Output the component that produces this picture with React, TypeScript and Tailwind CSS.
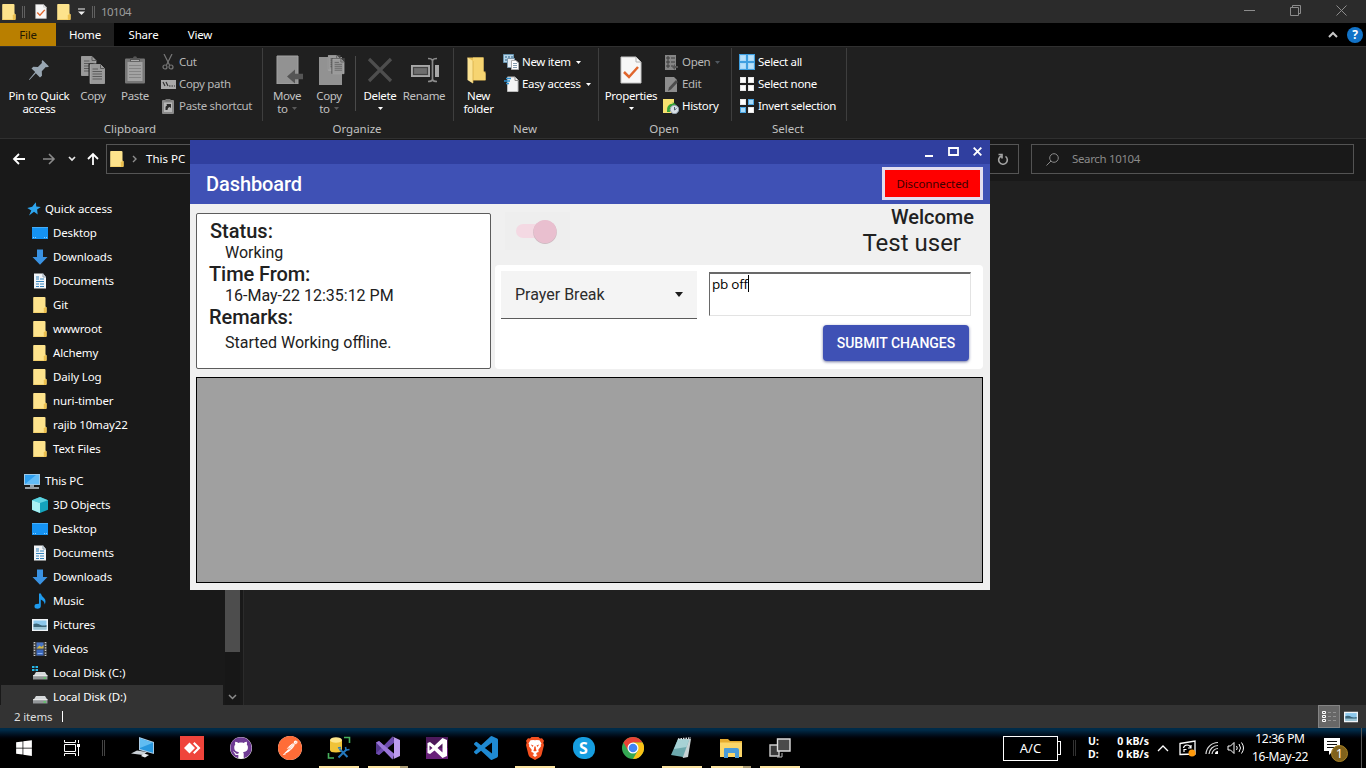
import React from "react";
import { FaGithub, FaWindows } from "react-icons/fa";
import { SiPostman } from "react-icons/si";

type IconProps = { className?: string };

const Svg = ({ w, h, vb, className = "", children }: { w: number; h: number; vb?: string; className?: string; children: React.ReactNode }) => (
  <svg width={w} height={h} viewBox={vb ?? `0 0 ${w} ${h}`} className={`block shrink-0 ${className}`} fill="none">
    {children}
  </svg>
);

/* ---------- explorer icons ---------- */

const FolderIcon = ({ className }: IconProps) => (
  <Svg w={14} h={16} className={className}>
    <path d="M1 0h10.500q1 0 1 1v8.500l1 .8V15q0 1-1 1H1q-.8 0-.8-.8V.8Q.2 0 1 0z" fill="#fde38c" />
    <path d="M10.800 16v-4.500l1.600-1.700 1.200.7V15q0 1-1 1z" fill="#ecc04f" />
    <path d="M.2 15h10.600v1H1q-.8 0-.8-1z" fill="#f5d26d" />
  </Svg>
);

const CheckDoc = ({ w = 12, h = 15 }: { w?: number; h?: number }) => (
  <Svg w={w} h={h} vb="0 0 22 28">
    <path d="M1 1h15l5 5v21H1z" fill="#f7f7f7" stroke="#c4c4c4" />
    <path d="M16 1v5h5" stroke="#b0b0b0" />
    <path d="m4 16 5 5 9-10" stroke="#e0662d" strokeWidth="2.500" />
  </Svg>
);

const PinIcon = () => (
  <Svg w={22} h={22}>
    <path d="m14.500 1 6.500 6.500-2 .8-1.200-.3-4 4.200.2 4.500-2 1.800-4.200-4.300L1.500 21 1 20.500 7.200 13 3.500 9.500l1.800-1.800 4.600.2 4-4-.2-1.500z" fill="#98a6b2" />
  </Svg>
);

const PageLines = ({ x, y }: { x: number; y: number }) => (
  <g transform={`translate(${x} ${y})`}>
    <path d="M.5.5H11l4 4v15H.5z" fill="#9a9a9a" stroke="#c0c0c0" strokeWidth=".6" />
    <path d="M11 .5v4h4M3 7.500h9.500M3 10h9.500M3 12.500h9.500M3 15h9.500M3 5h5.500" stroke="#5c5c5c" />
  </g>
);

const CopyIcon = () => (
  <Svg w={25} h={28}>
    <PageLines x={0} y={0} />
    <rect x="7.500" y="7.500" width="17" height="20.500" fill="#202020" />
    <PageLines x={8.500} y={8} />
  </Svg>
);

const PasteIcon = () => (
  <Svg w={22} h={28}>
    <rect x="1" y="2.500" width="20" height="25" rx="1" fill="#777" />
    <path d="M3.500 6h15v19h-15z" fill="#a3a3a3" />
    <path d="M5 9.500h12M5 12.500h12M5 15.500h12M5 18.500h12M5 21.500h12" stroke="#858585" />
    <path d="M6 2h3q0-1.700 2-1.700T13 2h3v3.500H6z" fill="#555" />
    <path d="M7 4.500h8" stroke="#aaa" />
  </Svg>
);

const CutIcon = () => (
  <Svg w={12} h={16}>
    <path d="M2 0 7.500 11M10 0 4.500 11" stroke="#777" strokeWidth="1.200" />
    <circle cx="3" cy="13" r="2" stroke="#777" strokeWidth="1.200" />
    <circle cx="9" cy="13" r="2" stroke="#777" strokeWidth="1.200" />
  </Svg>
);

const CopyPathIcon = () => (
  <Svg w={15} h={9}>
    <rect width="15" height="9" fill="#aaa" />
    <path d="m2 2 2 4M5 2l2 4" stroke="#333" strokeWidth="1.200" />
    <path d="M8 6h1.500M10.500 6H12M13 6h1" stroke="#333" strokeWidth="1.200" />
  </Svg>
);

const PasteShortcutIcon = () => (
  <Svg w={12} h={15}>
    <rect y="1" width="12" height="14" rx="1" fill="#8a8a8a" />
    <rect x="2" y="3.500" width="8" height="9.500" fill="#b8b8b8" />
    <path d="M3.500 11V8q0-1 1.500-1.500L4.500 5H9v4L7.500 8Q5.500 8.500 5.500 11z" fill="#2c2c2c" />
    <rect x="3.500" width="5" height="2.500" fill="#777" />
  </Svg>
);

const MoveToIcon = () => (
  <Svg w={27} h={29} className="ml-1">
    <path d="M1 1h21v28H1z" fill="#929292" />
    <path d="M1 1h21v28H1z" stroke="#a2a2a2" />
    <path d="m11 21.500 8-7v4.300h8v5.400h-8v4.300z" fill="#555" />
  </Svg>
);

const CopyToIcon = () => (
  <Svg w={27} h={30} className="ml-1">
    <path d="M1 2h23v28H1z" fill="#929292" />
    <g transform="translate(10 0) scale(.78)">
      <rect width="16" height="19" fill="#444" />
      <PageLines x={0} y={0} />
      <rect x="4.500" y="4" width="17" height="20" fill="#444" />
      <PageLines x={5.500} y={4.500} />
    </g>
  </Svg>
);

const DeleteIcon = () => (
  <Svg w={26} h={26}>
    <path d="m2 2 22 22M24 2 2 24" stroke="#4e4e4e" strokeWidth="3.200" />
  </Svg>
);

const RenameIcon = () => (
  <Svg w={28} h={26} className="ml-0.5">
    <path d="M0 8h19v12H0zM24 8h4v12h-4z" fill="#a8a8a8" />
    <rect x="2.500" y="10.500" width="14" height="7" fill="#6e6e6e" stroke="#444" strokeWidth="1.200" />
    <path d="M17 1.500q4 0 4.500 2 .5-2 4.500-2M21.500 3.500v19M17 24.500q4 0 4.500-2 .5 2 4.500 2" stroke="#8c8c8c" strokeWidth="1.700" />
  </Svg>
);

const NewFolderIcon = () => (
  <Svg w={19} h={28} className="-ml-1">
    <path d="M.5 1.500h16v14h2v9H5z" fill="#e8bf56" />
    <path d="M.5 1.500 6 5v22.500L.5 24z" fill="#fbe394" />
    <path d="M6 5V1.500h10.500v14l2 2V24H6z" fill="#f6d471" />
    <path d="M6 5v22" stroke="#d2a640" strokeWidth=".7" />
  </Svg>
);

const NewItemIcon = () => (
  <Svg w={16} h={16}>
    <path d="M.5.500h10v8h-10z" fill="#b8d6e8" stroke="#6894b0" />
    <path d="M2 3h2M5 3h2M8 3h2M2 6h3" stroke="#265f87" strokeWidth="1.200" />
    <path d="M4.500 4.500h7v9h-7z" fill="#e8eef4" stroke="#7d98ac" />
    <path d="M8.500 6.500h4.500l2.500 2.500v6.500h-7z" fill="#fff" stroke="#ababab" />
    <path d="M10 9.500h4M10 11.500h4M10 13.500h4" stroke="#859cae" />
  </Svg>
);

const EasyAccessIcon = () => (
  <Svg w={15} h={16}>
    <path d="M3.500 1H11l3 3V15.500H3.500z" fill="#f4f4f4" stroke="#bbb" />
    <path d="M11 1v3.500h3.500" stroke="#8e8e8e" />
    <path d="M2 2.500h5M0 5h6M2 7.500h3" stroke="#2b8fcf" strokeWidth="1.300" />
  </Svg>
);

const OpenIcon = () => (
  <Svg w={13} h={15}>
    <path d="M0 0h11v15H0z" fill="#858585" />
    <path d="M2 2h2v2H2zM2 6h2v2H2zM2 10h2v2H2zM6 3h4M6 7h4M6 11h2" stroke="#3c3c3c" />
    <path d="m7 12 3-3v2h3v2h-3v2z" fill="#555" />
  </Svg>
);

const EditIcon = () => (
  <Svg w={13} h={15}>
    <path d="M0 0h9l3 3v12H0z" fill="#8d8d8d" />
    <path d="M3 14 4 10.500 11 3l2 2-7 7.500z" fill="#4c4c4c" />
  </Svg>
);

const HistoryIcon = () => (
  <Svg w={16} h={15}>
    <path d="M0 0h11v14H0z" fill="#f7e16f" />
    <path d="M4 13Q3 5 10 4.500L9.500 3 13 5.500 10 8.500V7Q6 7.500 7 13z" fill="#35a43a" />
    <circle cx="11.500" cy="10.500" r="4.200" fill="#d8e0e6" stroke="#8f9eac" />
    <path d="M11.500 8v3l2-1.500" stroke="#4c5c6a" />
  </Svg>
);

const SquaresIcon = ({ colors, frame = false }: { colors: string[]; frame?: boolean }) => (
  <Svg w={16} h={16}>
    {frame && <rect width="16" height="16" fill="#3f9fe0" />}
    {colors.map((c, i) => (
      <rect key={i} x={i % 2 ? 9.5 : 1.5} y={i > 1 ? 9.5 : 1.5} width="5" height="5" fill={c} stroke={c === "#fff" ? "#e8e8e8" : frame ? "#a9d8f7" : "#4aa6e4"} />
    ))}
  </Svg>
);

const StarIcon = () => (
  <Svg w={14} h={14} className="ml-[3px]">
    <path d="m8.800.3.5 4.300 4.500.3-3.700 2.500.6 5.100-3.700-2.800-5 3.800 2.300-5.100L.3 6l4.900-1.200z" fill="#2ea5ee" />
  </Svg>
);

const DesktopIcon = () => (
  <Svg w={16} h={12}>
    <rect width="16" height="12" fill="#1593f3" />
    <path d="M0 0h16v1H0z" fill="#46adf8" />
    <path d="M1 10.500h3M12 10.500h3" stroke="#8ed0ff" strokeDasharray="1 1" />
  </Svg>
);

const DownloadIcon = () => (
  <Svg w={16} h={16}>
    <path d="M5 .5h6V8h4.500L8 15.800.5 8H5z" fill="#3a92e2" />
  </Svg>
);

const DocIcon = () => (
  <Svg w={12} h={16}>
    <path d="M0 .5h9L12 4v11.500H0z" fill="#f2f5f8" />
    <path d="M9 .5V4h3" stroke="#8c9cab" />
    <path d="M2 4h3M2 6h3M6 6h4M2 8.500h8M2 11h3M6 11h4M2 13.500h3M6 13.500h4" stroke="#3484bd" />
  </Svg>
);

const PcIcon = () => (
  <Svg w={16} h={15}>
    <rect x=".5" y=".5" width="15" height="10" fill="#2f9ff0" stroke="#9dc9e8" />
    <path d="M1 10 12 1h3v9z" fill="#62bcf8" />
    <path d="M6 11h4v2H6z" fill="#90a0ac" />
    <path d="M1 14h14" stroke="#c2ccd4" strokeWidth="1.500" />
  </Svg>
);

const CubeIcon = () => (
  <Svg w={16} h={16}>
    <path d="m8 0 8 3.300v9.400L8 16 0 12.700V3.300z" fill="#14a3bb" />
    <path d="m8 0 8 3.300L8 6 0 3.300z" fill="#5fd3e0" />
    <path d="m0 3.300 8 2.700v10l-8-3.300z" fill="#a9f0f2" />
  </Svg>
);

const MusicIcon = () => (
  <Svg w={12} h={16}>
    <path d="M5 .5h1.800Q7.500 3 10 5t.8 6.500Q10.500 8 6.800 6.500V13q0 2.800-3.300 2.800T.5 13.200q0-2.600 4.500-2.400z" fill="#1e9bee" />
  </Svg>
);

const PictureIcon = ({ w = 16 }: { w?: number }) => (
  <Svg w={w} h={12} vb="0 0 16 12">
    <rect width="16" height="12" fill="#f0f4f7" />
    <rect x="1.500" y="1.500" width="13" height="9" fill="#8cc8ec" />
    <path d="M1.500 5q4-1.500 7 1 3 1 6 0v2h-13z" fill="#3c6578" />
    <path d="M1.500 8h13v2.500h-13z" fill="#9bc4d4" />
  </Svg>
);

const VideoIcon = () => (
  <Svg w={14} h={14}>
    <rect width="14" height="14" fill="#3a3a3a" />
    <path d="M1.500 0v14M12.500 0v14" stroke="#ccc" strokeWidth="1.500" strokeDasharray="1.300 1.300" />
    <rect x="3.500" y=".5" width="7" height="6" fill="#4773c4" />
    <path d="m3.500 6.500 3-3 2 1.500 2-2v3.500z" fill="#d5b540" />
    <rect x="3.500" y="7.500" width="7" height="6" fill="#3c68bc" />
    <path d="M4.500 11.500h5" stroke="#8bb4ee" />
  </Svg>
);

const DiskIcon = ({ win = false }: { win?: boolean }) => (
  <Svg w={16} h={15}>
    {win && <path d="M0 0h2.500v2H0zM3.500 0H6v2H3.500zM0 3h2.500v2H0zM3.500 3H6v2H3.500z" fill="#27b7e8" />}
    <path d="M4 6h9l2.500 4h-14z" fill="#d5d8da" />
    <path d="M1 9.500h14.500v4H1z" fill="#929698" />
    <path d="M1 9.700h14.500" stroke="#f2f2f2" />
    <path d="M11.500 12h2.500" stroke="#51d35a" strokeWidth="1.300" />
  </Svg>
);

const Caret = ({ className = "text-white" }: IconProps) => (
  <Svg w={5} h={3} className={className}>
    <path d="M0 0h5L2.500 3z" fill="currentColor" />
  </Svg>
);

/* ---------- ribbon ---------- */

const BigButton = ({ icon, lines, width, dim = false, caret }: { icon: React.ReactNode; lines: string[]; width: string; dim?: boolean; caret?: "inline" | "below" }) => (
  <div className={`flex flex-col items-center ${width} ${dim ? "text-[#c2c2c2]" : "text-white"}`}>
    <div className="flex h-[37px] items-center justify-center">{icon}</div>
    <div className="mt-px text-center leading-[13px] whitespace-nowrap">
      {lines.map((l, i) => (
        <div key={l} className="flex items-center justify-center gap-1">
          {l}
          {caret === "inline" && i === lines.length - 1 && <Caret className="text-[#5a5a5a]" />}
        </div>
      ))}
    </div>
    {caret === "below" && <Caret className="mt-[5px]" />}
  </div>
);

type SmallItem = { icon: React.ReactNode; label: string; dim?: boolean; caret?: boolean };

const SmallList = ({ items }: { items: SmallItem[] }) => (
  <div className="flex flex-col">
    {items.map((it) => (
      <div key={it.label} className={`flex h-[22px] items-center gap-[3px] whitespace-nowrap ${it.dim ? "text-[#b8b8b8]" : "text-white"}`}>
        <span className="flex w-4 justify-center">{it.icon}</span>
        <span>{it.label}</span>
        {it.caret && <Caret className={it.dim ? "ml-0.5 text-[#505860]" : "ml-0.5 text-white"} />}
      </div>
    ))}
  </div>
);

const Group = ({ label, width, pad = "", children }: { label: string; width: string; pad?: string; children: React.ReactNode }) => (
  <section className={`flex shrink-0 ${width}`}>
    <div className="flex min-w-0 flex-1 flex-col">
      <div className={`flex h-[70px] ${pad}`}>{children}</div>
      <div className="flex h-[15px] items-center justify-center pr-0.5 tracking-normal text-[#c0c0c0]">{label}</div>
    </div>
    <div className="-mt-[3px] h-[73px] w-px bg-[#3e3e3e]" />
  </section>
);

const Ribbon = () => (
  <div className="flex h-[93px] border-t border-b border-[#303030] bg-[#202020] pt-1 tracking-[-0.330px]">
    <Group label="Clipboard" width="w-[263px]" pad="pl-0.5">
      <BigButton width="w-[74px]" icon={<PinIcon />} lines={["Pin to Quick", "access"]} />
      <BigButton width="w-[34px]" dim icon={<CopyIcon />} lines={["Copy"]} />
      <BigButton width="w-[50px]" dim icon={<PasteIcon />} lines={["Paste"]} />
      <SmallList
        items={[
          { icon: <CutIcon />, label: "Cut", dim: true },
          { icon: <CopyPathIcon />, label: "Copy path", dim: true },
          { icon: <PasteShortcutIcon />, label: "Paste shortcut", dim: true },
        ]}
      />
    </Group>
    <Group label="Organize" width="w-[191px]" pad="pl-[3px]">
      <BigButton width="w-[42px]" dim icon={<MoveToIcon />} lines={["Move", "to"]} caret="inline" />
      <BigButton width="w-[42px]" dim icon={<CopyToIcon />} lines={["Copy", "to"]} caret="inline" />
      <div className="mr-[3px] ml-[5px] mt-[5px] h-[55px] w-px bg-[#4a4a4a]" />
      <BigButton width="w-[42px]" icon={<DeleteIcon />} lines={["Delete"]} caret="below" />
      <BigButton width="w-[46px]" dim icon={<RenameIcon />} lines={["Rename"]} />
    </Group>
    <Group label="New" width="w-[145px]" pad="pl-[3px]">
      <BigButton width="w-[43px]" icon={<NewFolderIcon />} lines={["New", "folder"]} />
      <div className="pl-[3px]">
        <SmallList
          items={[
            { icon: <NewItemIcon />, label: "New item", caret: true },
            { icon: <EasyAccessIcon />, label: "Easy access", caret: true },
          ]}
        />
      </div>
    </Group>
    <Group label="Open" width="w-[133px]" pad="pl-[3px]">
      <BigButton width="w-[58px]" icon={<CheckDoc w={22} h={28} />} lines={["Properties"]} caret="below" />
      <div className="pl-[3px]">
        <SmallList
          items={[
            { icon: <OpenIcon />, label: "Open", dim: true, caret: true },
            { icon: <EditIcon />, label: "Edit", dim: true },
            { icon: <HistoryIcon />, label: "History" },
          ]}
        />
      </div>
    </Group>
    <Group label="Select" width="w-[115px]" pad="pl-[7px]">
      <SmallList
        items={[
          { icon: <SquaresIcon frame colors={["#b7e0fa", "#b7e0fa", "#b7e0fa", "#b7e0fa"]} />, label: "Select all" },
          { icon: <SquaresIcon colors={["#fff", "#fff", "#fff", "#fff"]} />, label: "Select none" },
          { icon: <SquaresIcon colors={["#fff", "#a9daf8", "#a9daf8", "#fff"]} />, label: "Invert selection" },
        ]}
      />
    </Group>
  </div>
);

/* ---------- top bars ---------- */

const TitleBar = () => (
  <div className="flex h-[23px] items-center bg-[#2b2b2b] text-[#9c9c9c]">
    <FolderIcon className="ml-0.5" />
    <span className="ml-[6px] h-3 w-[3px] border-x border-[#606060]" />
    <span className="ml-[10px]"><CheckDoc /></span>
    <FolderIcon className="ml-[10px]" />
    <Svg w={7} h={7} className="ml-[7px]">
      <path d="M0 1h7" stroke="#eee" />
      <path d="M0 3.500h7L3.500 7z" fill="#eee" />
    </Svg>
    <span className="mr-[6px] ml-[7px] h-3 w-[3px] border-x border-[#606060]" />
    <span className="tracking-[-0.550px]">10104</span>
    <div className="mr-[19px] mb-[3px] ml-auto flex items-center gap-[35px] text-[#8c8c8c]">
      <Svg w={11} h={11}><path d="M0 5.500h11" stroke="currentColor" /></Svg>
      <Svg w={11} h={11}><path d="M.5 2.500h8v8h-8zM2.500 2.500v-2h8v8h-2" stroke="currentColor" /></Svg>
      <Svg w={11} h={11}><path d="m.5.500 10 10m0-10-10 10" stroke="currentColor" /></Svg>
    </div>
  </div>
);

const TabRow = () => (
  <div className="flex h-[23px] bg-black tracking-[-0.2px] text-white">
    <div className="flex w-14 items-center justify-center bg-[#b97f00] text-[#251a00]">File</div>
    <div className="flex w-[58px] items-center justify-center bg-[#202020]">Home</div>
    <div className="flex w-[59px] items-center justify-center">Share</div>
    <div className="flex w-[54px] items-center justify-center">View</div>
    <div className="mr-[3px] ml-auto flex items-center gap-[9px]">
      <Svg w={10} h={7}><path d="m1 6 4-4 4 4" stroke="#c8c8c8" strokeWidth="2" /></Svg>
      <span className="flex size-[16px] items-center justify-center rounded-full bg-[#1273c8] text-[12px] font-bold">?</span>
    </div>
  </div>
);

const AddressRow = () => (
  <div className="flex h-[42px] items-start bg-[#191919] pt-[5px]">
    <div className="flex h-[30px] w-[106px] items-center pl-3">
      <Svg w={14} h={12}><path d="M13 6H2m5-5L2 6l5 5" stroke="#fff" strokeWidth="1.800" /></Svg>
      <Svg w={14} h={12} className="ml-4"><path d="M1 6h11M7 1l5 5-5 5" stroke="#8a8a8a" strokeWidth="1.600" /></Svg>
      <Svg w={8} h={6} className="ml-[12px]"><path d="m1 1 3 3 3-3" stroke="#e8e8e8" strokeWidth="1.700" /></Svg>
      <Svg w={12} h={14} className="ml-[11px]"><path d="M6 13V2M1 7l5-5 5 5" stroke="#fff" strokeWidth="1.800" /></Svg>
    </div>
    <div className="flex h-[30px] w-[913px] items-center border border-[#555] pl-[3px] text-white">
      <FolderIcon />
      <Svg w={5} h={8} className="ml-2"><path d="m1 1 3 3-3 3" stroke="#8e8e8e" strokeWidth="1.400" /></Svg>
      <span className="ml-[9px]">This PC</span>
      <Svg w={12} h={12} className="mr-[9px] ml-auto"><path d="M4.200 3A4.300 4.300 0 1 0 8.500 3.400M1.500 1.500H5V5.500" stroke="#a4a4a4" strokeWidth="1.600" /></Svg>
    </div>
    <div className="ml-3 flex h-[30px] w-[323px] items-center border border-[#535353] pl-[14px] text-[#8a8a8a]">
      <Svg w={13} h={13}>
        <circle cx="8" cy="5" r="4.300" stroke="#8a8a8a" />
        <path d="M5 8 .5 12.500" stroke="#8a8a8a" />
      </Svg>
      <span className="ml-[13px] tracking-[-0.350px]">Search 10104</span>
    </div>
  </div>
);

/* ---------- navigation pane ---------- */

const NavRow = ({ icon, label, root = false, selected = false }: { icon: React.ReactNode; label: string; root?: boolean; selected?: boolean }) => (
  <div className={`ml-px flex h-6 w-[222px] shrink-0 items-center text-white ${root ? "pl-[23px]" : "pl-[31px]"} ${selected ? "bg-[#333]" : ""}`}>
    <span className="flex w-4 justify-center">{icon}</span>
    <span className="ml-[5px] whitespace-nowrap">{label}</span>
  </div>
);

const quickFolders = ["Git", "wwwroot", "Alchemy", "Daily Log", "nuri-timber", "rajib 10may22", "Text Files"];

const NavPane = () => (
  <div className="flex w-[244px] overflow-hidden border-r border-[#2b2b2b] bg-[#191919] tracking-[-0.130px]">
    <div className="flex w-[225px] flex-col pt-4">
      <NavRow root icon={<StarIcon />} label="Quick access" />
      <NavRow icon={<DesktopIcon />} label="Desktop" />
      <NavRow icon={<DownloadIcon />} label="Downloads" />
      <NavRow icon={<DocIcon />} label="Documents" />
      {quickFolders.map((f) => (
        <NavRow key={f} icon={<FolderIcon />} label={f} />
      ))}
      <div className="h-2 shrink-0" />
      <NavRow root icon={<PcIcon />} label="This PC" />
      <NavRow icon={<CubeIcon />} label="3D Objects" />
      <NavRow icon={<DesktopIcon />} label="Desktop" />
      <NavRow icon={<DocIcon />} label="Documents" />
      <NavRow icon={<DownloadIcon />} label="Downloads" />
      <NavRow icon={<MusicIcon />} label="Music" />
      <NavRow icon={<PictureIcon />} label="Pictures" />
      <NavRow icon={<VideoIcon />} label="Videos" />
      <NavRow icon={<DiskIcon win />} label="Local Disk (C:)" />
      <NavRow selected icon={<DiskIcon />} label="Local Disk (D:)" />
    </div>
    <div className="flex w-[15px] flex-col items-center justify-between bg-[#171717] pb-[5px]">
      <div className="h-[471px] w-full bg-[#4d4d4d]" />
      <Svg w={9} h={6}><path d="m1 1 3.500 3.500L8 1" stroke="#8c8c8c" strokeWidth="1.500" /></Svg>
    </div>
  </div>
);

const StatusBar = () => (
  <div className="flex h-[23px] items-center bg-[#333] pl-[14px] text-[#dedede]">
    <span className="tracking-[-0.150px]">2 items</span>
    <span className="ml-[10px] h-[11px] w-px bg-white" />
    <div className="mr-[8px] ml-auto flex items-center">
      <span className="flex h-[23px] w-[22px] items-center justify-center border border-[#848484] bg-[#676767]">
        <Svg w={14} h={12}>
          <path d="M.5.500h3v2h-3zM.5 4.500h3v2h-3zM.5 8.500h3v2h-3z" stroke="#fff" />
          <path d="M6 1.500h3M11 1.500h3M6 5.500h3M11 5.500h3M6 9.500h3M11 9.500h3" stroke="#929292" />
        </Svg>
      </span>
      <span className="ml-1"><PictureIcon w={14} /></span>
    </div>
  </div>
);

/* ---------- dashboard window ---------- */

const StatusCard = () => (
  <div className="h-[156px] w-[295px] rounded-[2px] border border-[#5c5c5c] bg-white pt-[5px] pl-[13px] text-[#212121]">
    <div className="text-[20px] leading-[24px] font-medium">Status:</div>
    <div className="pl-[15px] text-[16px] leading-[19px]">Working</div>
    <div className="-ml-px text-[20px] leading-[24px] font-medium tracking-[-0.080px]">Time From:</div>
    <div className="pl-[15px] text-[16px] leading-[19px]">16-May-22 12:35:12 PM</div>
    <div className="-ml-px text-[20px] leading-[24px] font-medium tracking-[-0.080px]">Remarks:</div>
    <div className="mt-1 pl-[15px] text-[16px] leading-[19px]">Started Working offline.</div>
  </div>
);

const ChangeForm = () => (
  <div className="h-[104px] rounded-[4px] bg-white pt-[6px] pl-[6px]">
    <div className="flex">
      <div className="flex h-12 w-[196px] items-center justify-between border-b border-[#5b5b5b] bg-[#f4f4f4] pr-[14px] pl-[14px] text-[16px] text-[#2c2c2c]">
        <span>Prayer Break</span>
        <Svg w={8} h={5}><path d="M0 0h8L4 5z" fill="#1c1c1c" /></Svg>
      </div>
      <div className="mt-px ml-3 flex h-[44px] w-[262px] items-start border-t-2 border-r border-b border-l border-t-[#696969] border-r-[#e3e3e3] border-b-[#e3e3e3] border-l-[#696969] pt-px pl-[2px] text-black">
        <span className="font-['Open_Sans',sans-serif] text-[13.500px] leading-[18px] tracking-[-0.250px]">pb off</span>
        <span className="h-[17px] w-px bg-black" />
      </div>
    </div>
    <div className="mt-[6px] mr-[14px] flex justify-end">
      <button className="h-9 w-[146px] rounded-[4px] bg-[#3f51b5] text-[14px] font-medium whitespace-nowrap text-white shadow-[0_1px_3px_rgba(20,30,100,0.6)]">SUBMIT CHANGES</button>
    </div>
  </div>
);

const Dashboard = () => (
  <div className="absolute top-[140px] left-[190px] flex h-[450px] w-[800px] flex-col bg-[#f0f0f0] font-[Roboto,sans-serif]">
    <div className="flex h-6 items-center justify-end gap-[14px] bg-[#303f9f] pr-[8px] pb-px">
      <Svg w={10} h={10}><path d="M1 9h8" stroke="#fff" strokeWidth="2" /></Svg>
      <Svg w={11} h={9}><path d="M1 1h9v7H1z" stroke="#fff" strokeWidth="1.800" /></Svg>
      <Svg w={9} h={9}><path d="m.7.700 7.600 7.600M8.300.700.700 8.300" stroke="#fff" strokeWidth="1.900" /></Svg>
    </div>
    <div className="flex h-10 items-center justify-between bg-[#3f51b5] pr-[7px] pl-4">
      <h1 className="text-[20px] font-medium tracking-[-0.080px] text-white">Dashboard</h1>
      <div className="mb-px flex h-[33px] w-[101px] items-center justify-center border-[3px] border-[#e3dff0] bg-[#f00] font-['Noto_Sans',sans-serif] text-[11.500px] tracking-[-0.1px] text-[#400000]">Disconnected</div>
    </div>
    <div className="flex h-[173px] shrink-0 pt-[9px] pl-[6px]">
      <StatusCard />
      <div className="-mt-[9px] ml-1 w-[488px]">
        <div className="flex h-[61px] justify-between">
          <div className="mt-2 ml-[10px] flex h-[38px] w-[65px] items-center bg-[#eee] pl-[11px]">
            <Svg w={44} h={28}>
              <rect x="0" y="7" width="36" height="14" rx="7" fill="#f4d9e3" />
              <circle cx="29" cy="15.200" r="11.800" fill="#cdbac1" />
              <circle cx="29" cy="14.500" r="11.500" fill="#e9bfcf" />
            </Svg>
          </div>
          <div className="pt-px text-[#212121]">
            <div className="pr-[9px] text-right text-[20px] leading-[24px] font-medium">Welcome</div>
            <div className="pr-[22px] text-right text-[24px] leading-[28px]">Test user</div>
          </div>
        </div>
        <ChangeForm />
      </div>
    </div>
    <div className="ml-[6px] h-[206px] w-[787px] border border-black bg-[#a0a0a0]" />
  </div>
);

/* ---------- taskbar ---------- */

const vsCodePath =
  "M23.150 2.587L18.210.210a1.494 1.494 0 0 0-1.705.290l-9.460 8.630-4.120-3.128a.999.999 0 0 0-1.276.057L.327 7.261A1 1 0 0 0 .326 8.740L3.899 12 .326 15.260a1 1 0 0 0 .001 1.479L1.650 17.940a.999.999 0 0 0 1.276.057l4.120-3.128 9.460 8.630a1.492 1.492 0 0 0 1.704.290l4.942-2.377A1.500 1.500 0 0 0 24 20.060V3.939a1.500 1.500 0 0 0-.850-1.352zm-5.146 14.861L10.826 12l7.178-5.448v10.896z";

const RemoteIcon = () => (
  <Svg w={24} h={24}>
    <path d="m8 1 15 5v12L8 14z" fill="#a9cce6" />
    <path d="m9 2.500 13 4.300v10L9 13z" fill="#2797df" />
    <path d="m9 2.500 13 4.300L9 12z" fill="#60bcf2" />
    <path d="m0 17.500 6-3 10 1.500-4 3z" fill="#c9d0d6" />
    <path d="m10 20 3-2.500 5 1.500-4 2.500z" fill="#e6eaed" />
  </Svg>
);

const AnyDeskIcon = () => (
  <Svg w={24} h={24}>
    <rect width="24" height="24" fill="#ef443b" />
    <path d="m9.500 6.500 5.500 5.500-5.500 5.500L4 12z" fill="#fff" />
    <path d="m13 7.500 1.500-1.500 6 6-6 6L13 16.500l4.500-4.500z" fill="#fff" />
  </Svg>
);

const DbToolsIcon = () => (
  <Svg w={24} h={24}>
    <path d="M3 4v10q0 2.500 6 2.500t6-2.500V4z" fill="#f0c338" />
    <ellipse cx="9" cy="4" rx="6" ry="2.800" fill="#fde68c" />
    <path d="M17 1.500h5.500V7M1.500 17v5H7" stroke="#47b15d" strokeWidth="1.600" />
    <path d="m12.500 13 8 8M19.500 13.500l-8 8" stroke="#2378bd" strokeWidth="2" />
    <path d="m18.500 11 .5 3 3.500-.5M11 12l3-.5" stroke="#2378bd" strokeWidth="1.600" />
  </Svg>
);

const VsIcon = () => (
  <Svg w={24} h={24}>
    <path d="M0 6.500 3 5l3 2.500v9L3 19l-3-1.500z" fill="#53378e" />
    <path d="M0 17.500 16.500.500 19 6 3 19z" fill="#6d4bae" />
    <path d="M0 6.500 3 5l15.500 13-2 5.500z" fill="#9a76d8" />
    <path d="m16.500.500 7.500 3.500v16l-7.500 3.500q1.500-.5 1.500-3v-17q0-2-1.500-3z" fill="#bd9bee" />
  </Svg>
);

const VsOldIcon = () => (
  <Svg w={22} h={22}>
    <rect y="11" width="22" height="11" fill="#68217a" />
    <rect width="22" height="22" fill="#68217a" opacity=".75" />
    <path d="M16.500 1 21 3v16l-4.500 2-8-7.500L4 17l-2.500-1V6L4 5l4.500 3.500zm0 5.500L11.500 11l5 4.500zM3.500 8.500v5L6.500 11z" fill="#fff" fillRule="evenodd" />
  </Svg>
);

const BraveIcon = () => (
  <Svg w={20} h={23}>
    <path d="M5 1.500 6.500 0h7L15 1.500l2-.2 2 2.500-.7 2 .7 2.200-2.500 10q-.6 1.600-2 2.500L10 23l-4.500-2.500q-1.400-.9-2-2.500L1 8l.7-2.200-.7-2 2-2.500z" fill="#f4501f" />
    <path d="m10 3.300 1.500-.3 3 .3 2 3.200-.8 1.300.3 1.500-2.700 3.500.4 2.200-1.700.5-1 1.500-1 .7-1-.7-1-1.500-1.700-.5.400-2.200L4 9.300l.3-1.500-.8-1.300 2-3.200 3-.3zM7.500 18 10 16.500l2.500 1.500-2.500 2z" fill="#fff" />
    <path d="m5.800 7.500 2.700 1-1 1.500zM14.200 7.500l-2.700 1 1 1.500zM9.300 9.500h1.400l.3 3 .9.8-1.900 1.200-1.900-1.200.9-.8z" fill="#f4501f" />
  </Svg>
);

const SkypeIcon = () => (
  <span className="flex size-[22px] items-center justify-center rounded-[9px_11px_9px_11px] bg-[#169ee0] font-['Open_Sans',sans-serif] text-[16px] leading-none font-bold text-white">S</span>
);

const ChromeIcon = () => (
  <Svg w={22} h={22}>
    <circle cx="11" cy="11" r="11" fill="#34a853" />
    <path d="M1.470 5.500A11 11 0 0 1 20.530 5.500H11L6.240 13.750z" fill="#ea4335" />
    <path d="M20.530 5.500A11 11 0 0 1 11 22l4.760-8.250L11 5.500z" fill="#fbc116" />
    <circle cx="11" cy="11" r="5.500" fill="#fff" />
    <circle cx="11" cy="11" r="4.300" fill="#4285f4" />
  </Svg>
);

const NotepadIcon = () => (
  <Svg w={24} h={24}>
    <path d="M8 3h13l-3 18-5 1z" fill="#c7d2d4" />
    <path d="m8 3 11 1-6 17-12-2z" fill="#6da9ad" />
    <path d="m8 3 11 1-2.500 7L4 13z" fill="#a7d2d5" />
    <path d="m8 3 13-1" stroke="#e2e8e9" strokeWidth="1.500" strokeDasharray="1.500 1" />
  </Svg>
);

const ExplorerIcon = () => (
  <Svg w={22} h={20}>
    <path d="M0 1h8l2 2h12v16H0z" fill="#e6ac30" />
    <path d="M0 4.500h22V19H0z" fill="#fbd669" />
    <path d="M5 10h12q2 0 2 2v8h-4v-5H8v5H4v-9q0-1 1-1z" fill="#4a9bd8" />
  </Svg>
);

const WindowsPairIcon = () => (
  <Svg w={22} h={20}>
    <path d="M1 7h9v11H1z" fill="#3a3a3a" stroke="#ccc" strokeWidth="1.400" />
    <path d="M8.500 1H21v12H8.500z" fill="#4b4b4b" stroke="#ddd" strokeWidth="1.400" />
    <path d="M8 19h5v-4" stroke="#bbb" />
  </Svg>
);

const apps: { icon: React.ReactNode; open?: "single" | "multi" }[] = [
  { icon: <RemoteIcon /> },
  { icon: <AnyDeskIcon /> },
  { icon: <span className="rounded-full bg-white"><FaGithub size={22} color="#6f3b94" /></span> },
  { icon: <span className="rounded-full bg-white"><SiPostman size={24} color="#ff6c37" /></span> },
  { icon: <DbToolsIcon />, open: "single" },
  { icon: <VsIcon />, open: "multi" },
  { icon: <VsOldIcon /> },
  { icon: <Svg w={24} h={24}><path d={vsCodePath} fill="#1f8ad2" /></Svg> },
  { icon: <BraveIcon />, open: "single" },
  { icon: <SkypeIcon /> },
  { icon: <ChromeIcon /> },
  { icon: <NotepadIcon />, open: "single" },
  { icon: <ExplorerIcon />, open: "multi" },
  { icon: <WindowsPairIcon />, open: "single" },
];

const Taskbar = () => (
  <div className="flex h-10 bg-linear-to-b from-[#002b48] from-5% to-black to-35% text-white">
    <div className="flex w-12 items-center justify-center"><FaWindows size={18} /></div>
    <div className="flex w-12 items-center justify-center">
      <Svg w={17} h={16}>
        <path d="M.5 0v2.500h11V0M.5 16v-2.500h11V16M.5 4.500h11v7H.5zM14.500 0v3M14.500 7v9" stroke="#fff" />
        <rect x="13" y="4" width="3" height="3" fill="#fff" />
      </Svg>
    </div>
    <div className="flex w-[22px] items-center pl-[6px]"><span className="h-[16px] w-[3px] border-x border-[#444]" /></div>
    {apps.map((a, i) => (
      <div key={i} className="flex w-[49px] flex-col items-center">
        <div className="flex h-[38px] items-center pt-[2px]">{a.icon}</div>
        {a.open && (
          <div className="flex h-0.5 w-10 bg-[#fbe3a0]">
            {a.open === "multi" && <div className="ml-auto w-2 bg-[#ab9c74]" />}
          </div>
        )}
      </div>
    ))}
    <div className="ml-auto flex items-center">
      <div className="flex items-center">
        <div className="flex h-[25px] w-[55px] items-center justify-center border border-white text-[13px]">A/C</div>
        <div className="h-[14px] w-[3px] border-y border-r border-white" />
      </div>
      <span className="ml-[12px] h-4 w-[3px] border-x border-[#333]" />
      <div className="ml-3 flex w-[61px] flex-col text-[10.500px] leading-[13px] font-bold">
        <div className="flex justify-between"><span>U:</span><span>0 kB/s</span></div>
        <div className="flex justify-between"><span>D:</span><span>0 kB/s</span></div>
      </div>
      <Svg w={12} h={7} className="ml-[8px]"><path d="m1 6 5-5 5 5" stroke="#fff" strokeWidth="1.300" /></Svg>
      <Svg w={17} h={17} className="ml-[10px]">
        <path d="M1 3.500 16 1v13L1 14.500z" stroke="#fff" strokeWidth="1.300" />
        <path d="M4.500 8Q5 5 8 5t3.500 2.500M12 5v3H9M5 12V9.500h2.500" stroke="#fff" strokeWidth="1.200" />
        <circle cx="13" cy="13" r="3.500" fill="#ff9a0c" />
      </Svg>
      <Svg w={14} h={14} className="ml-[9px]">
        <path d="M1 13A12 12 0 0 1 13 1.500M4 13a9 9 0 0 1 9-8.500M7 13a6 6 0 0 1 6-5.500" stroke="#ddd" strokeWidth="1.200" />
        <path d="M10 13a3 3 0 0 1 3-3v3z" fill="#fff" />
      </Svg>
      <Svg w={18} h={14} className="ml-[8px]">
        <path d="M1 5h2.500L7 1.500v11L3.500 9H1z" stroke="#fff" />
        <path d="M9.500 5q1.500 2 0 4M12 3q3 4 0 8M14.500 1.500q4 5.500 0 11" stroke="#fff" />
      </Svg>
      <div className="ml-[5px] w-[60px] text-center text-[12px] leading-[18px] tracking-[-0.320px] whitespace-nowrap">
        <div>12:36 PM</div>
        <div>16-May-22</div>
      </div>
      <div className="relative ml-[14px] h-6 w-6">
        <Svg w={16} h={17} className="mt-0.5">
          <path d="M0 0h16v13H9l-4 4v-4H0z" fill="#fff" />
          <path d="M3 3.500h10M3 6.500h10M3 9.500h10" stroke="#111" />
        </Svg>
        <span className="absolute top-[9px] left-[7px] flex size-[17px] items-center justify-center rounded-full border border-[#a88224] bg-[#80621c] text-[12px]">1</span>
      </div>
      <div className="mr-[4px] ml-[13px] h-10 w-px bg-[#555]" />
    </div>
  </div>
);

export default function App() {
  return (
    <div className="relative flex h-[768px] w-[1366px] flex-col overflow-hidden bg-[#202020] font-['Noto_Sans',sans-serif] text-[11.500px] leading-[16px]">
      <TitleBar />
      <TabRow />
      <Ribbon />
      <AddressRow />
      <div className="flex h-[524px] shrink-0 overflow-hidden">
        <NavPane />
      </div>
      <StatusBar />
      <Taskbar />
      <Dashboard />
    </div>
  );
}
